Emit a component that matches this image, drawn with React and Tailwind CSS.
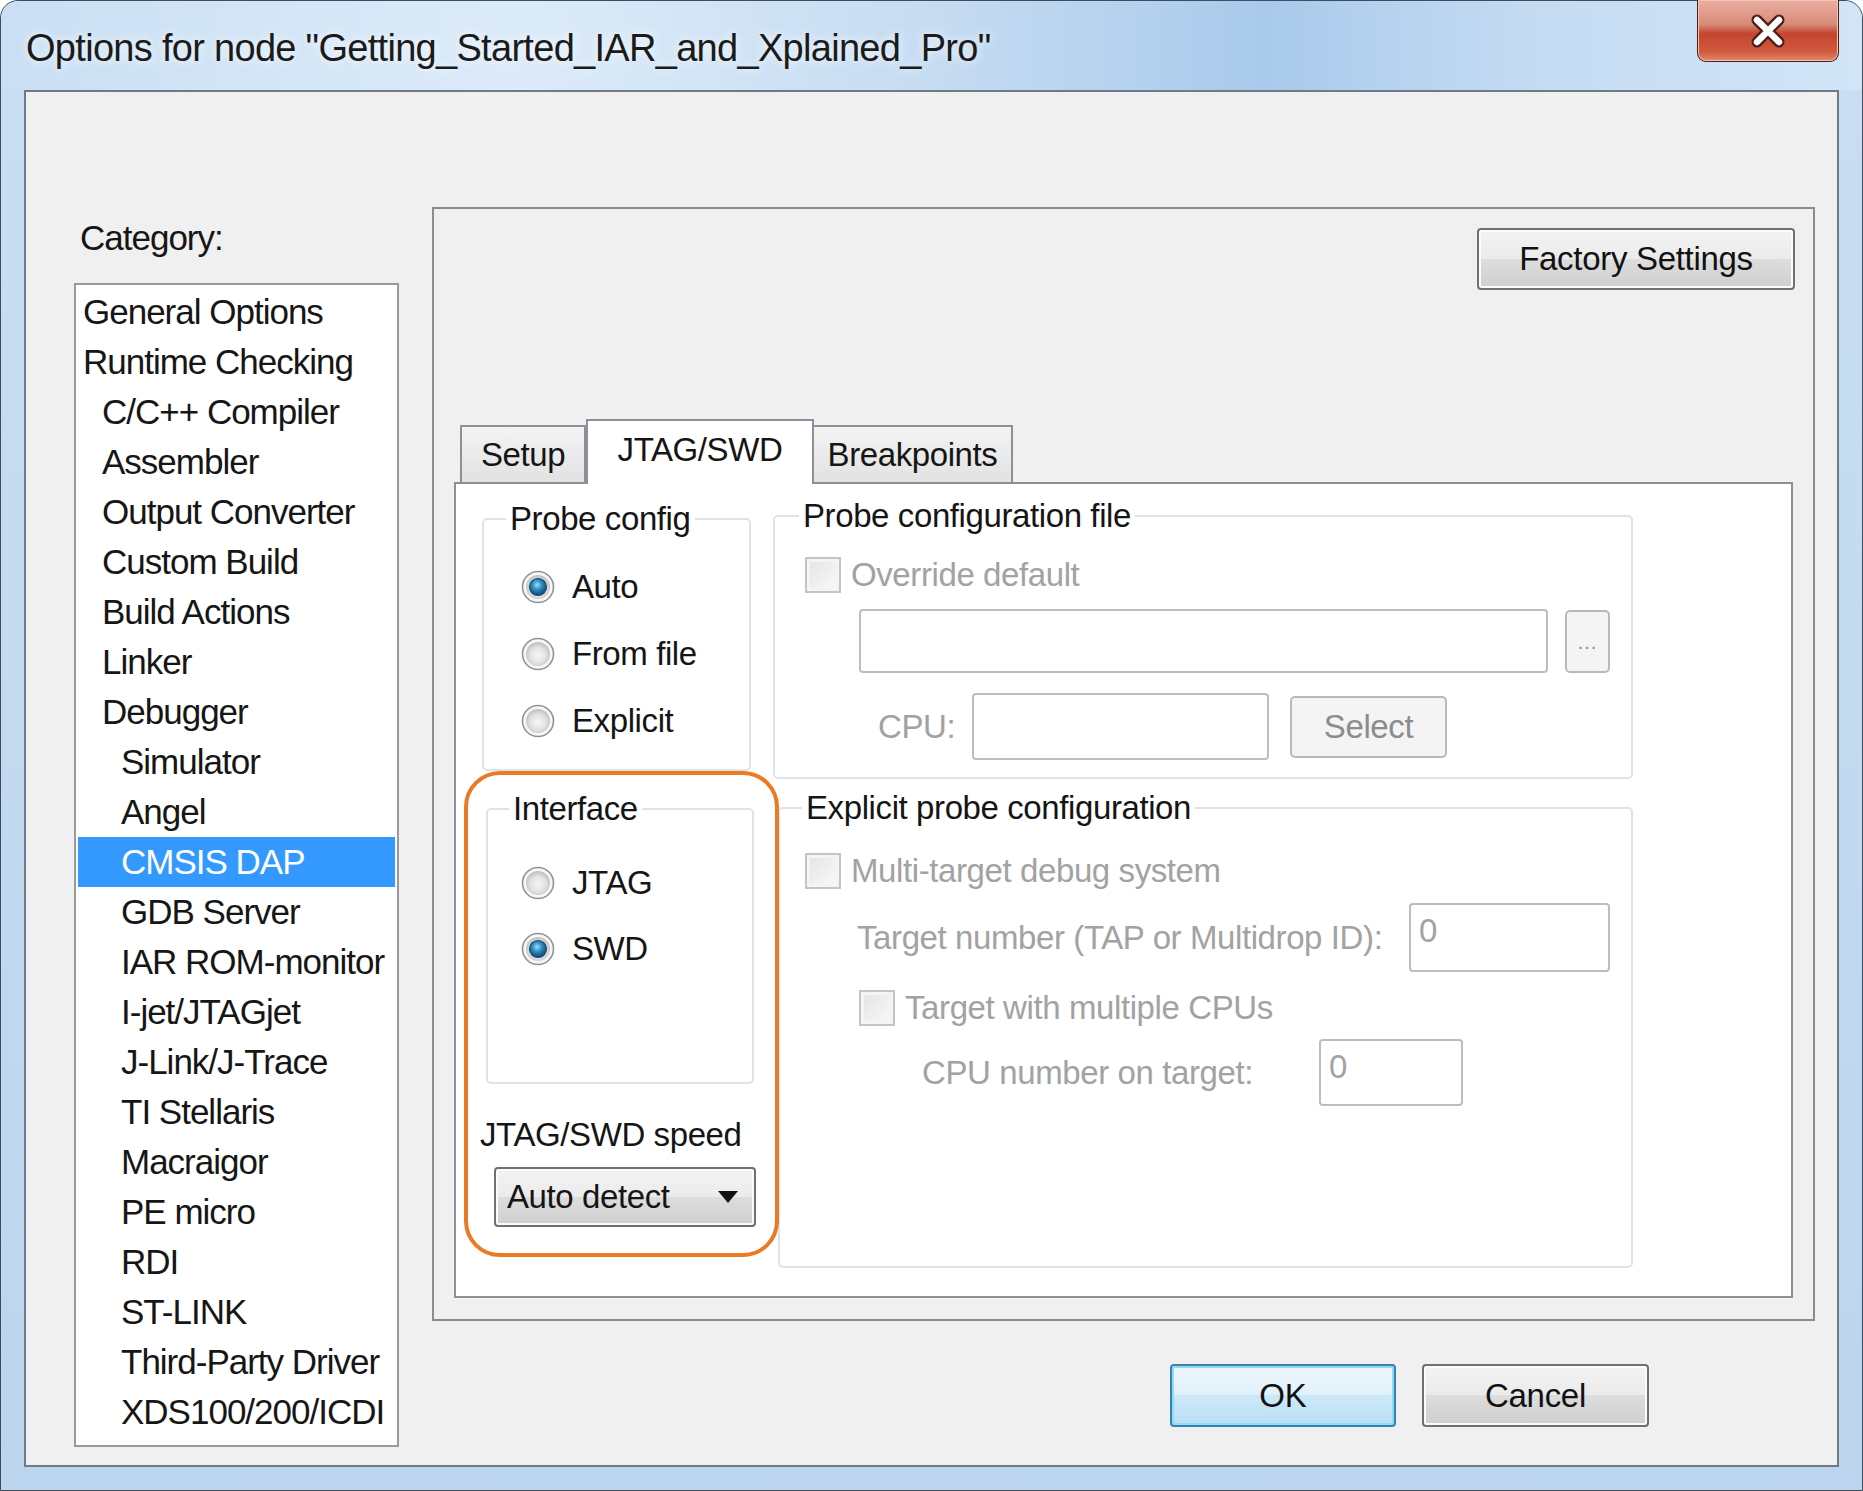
const items = [
  ["General Options", 0], ["Runtime Checking", 0], ["C/C++ Compiler", 1], ["Assembler", 1],
  ["Output Converter", 1], ["Custom Build", 1], ["Build Actions", 1], ["Linker", 1], ["Debugger", 1],
  ["Simulator", 2], ["Angel", 2], ["CMSIS DAP", 2], ["GDB Server", 2], ["IAR ROM-monitor", 2],
  ["I-jet/JTAGjet", 2], ["J-Link/J-Trace", 2], ["TI Stellaris", 2], ["Macraigor", 2], ["PE micro", 2],
  ["RDI", 2], ["ST-LINK", 2], ["Third-Party Driver", 2], ["XDS100/200/ICDI", 2],
]

const indent = ["pl-[5px]", "pl-[24px]", "pl-[43px]"]

const btn =
  "flex items-center justify-center rounded-[4px] border-[2px] border-[#707070] bg-[linear-gradient(to_bottom,#f3f3f3_0%,#ebebeb_50%,#dddddd_50%,#cfcfcf_100%)] shadow-[inset_0_0_0_2px_#fbfbfb] text-[33px] tracking-[-0.3px] text-[#111]"

const disabledBtn =
  "flex items-center justify-center rounded-[5px] border-[2px] border-[#b9b9b9] bg-[#f4f4f4] text-[#8c8c8c]"

const disabledInput = "rounded-[4px] border-[2px] border-[#bdbdbd] bg-white"

function Radio({ id, checked }) {
  return (
    <svg width="34" height="34" viewBox="0 0 34 34" className="shrink-0">
      <defs>
        <radialGradient id={id + "f"} cx="50%" cy="55%" r="55%">
          <stop offset="0%" stopColor="#f6f6f6" />
          <stop offset="60%" stopColor="#e2e2e2" />
          <stop offset="100%" stopColor="#bdbdbd" />
        </radialGradient>
        <radialGradient id={id + "d"} cx="45%" cy="38%" r="62%">
          <stop offset="0%" stopColor="#9ee0fa" />
          <stop offset="45%" stopColor="#2e8dc3" />
          <stop offset="100%" stopColor="#0c4671" />
        </radialGradient>
      </defs>
      <circle cx="17" cy="17" r="15.5" fill="#f7f7f7" stroke="#8f9398" strokeWidth="1.6" />
      <circle cx="17" cy="17" r="12" fill={`url(#${id}f)`} />
      {checked && <circle cx="17" cy="17" r="8.5" fill={`url(#${id}d)`} stroke="#1b4c70" strokeWidth="1.2" />}
    </svg>
  )
}

function Check() {
  return (
    <div className="w-[36px] h-[36px] shrink-0 border-[2px] border-[#c4c4c4] bg-[linear-gradient(135deg,#e3e3e3,#fafafa)] shadow-[inset_0_0_0_3px_#f4f4f4]" />
  )
}

function Group({ title, className, legendClass, children }) {
  return (
    <fieldset className={"border-[2px] border-[#dde3e8] rounded-[5px] " + className}>
      <legend className={"px-[4px] leading-[40px] text-[33px] tracking-[-0.4px] text-[#151515] " + legendClass}>{title}</legend>
      {children}
    </fieldset>
  )
}

export default function App() {
  return (
    <div className="w-[1863px] h-[1491px] overflow-hidden bg-white font-['Liberation_Sans',Arial,sans-serif]">
      <div className="w-full h-full rounded-t-[18px] border border-[#3d4d60] bg-[linear-gradient(to_bottom,#c9def3,#bcd5ee)] flex flex-col">
        {/* title bar */}
        <div className="h-[89px] flex items-start rounded-t-[18px] bg-[linear-gradient(to_right,#cadff4_0%,#dcebf9_28%,#c6dcf2_50%,#a9caec_68%,#c4dbf2_82%,#d2e5f7_100%)]">
          <div className="flex-1 ml-[25px] mt-[25px] leading-[44px] text-[38px] tracking-[-0.7px] text-[#1b1b1b] [text-shadow:0_0_10px_#ffffff]">
            Options for node "Getting_Started_IAR_and_Xplained_Pro"
          </div>
          <div className="mr-[23px] -mt-px w-[142px] h-[62px] rounded-b-[9px] border border-[#4b1f16] border-t-0 bg-[linear-gradient(to_bottom,#eab0a2_0%,#d88a78_40%,#c54530_55%,#d25a3d_85%,#e0896d_100%)] shadow-[inset_0_0_0_1px_#f3c3b6] flex items-center justify-center">
            <svg width="40" height="34" viewBox="0 0 40 34">
              <path d="M9 6 L31 28 M31 6 L9 28" stroke="#4a2019" strokeWidth="11" strokeLinecap="round" />
              <path d="M9 6 L31 28 M31 6 L9 28" stroke="#ffffff" strokeWidth="6.5" strokeLinecap="round" />
            </svg>
          </div>
        </div>

        {/* client area */}
        <div className="mx-[23px] h-[1377px] border-[2px] border-[#6e7a88] bg-[#f0f0f0] flex items-start">
          {/* category */}
          <div className="ml-[48px] w-[325px] flex flex-col">
            <div className="mt-[124px] ml-[6px] leading-[44px] text-[35px] tracking-[-1px] text-[#161616]">Category:</div>
            <div className="mt-[23px] h-[1164px] border-[2px] border-[#9a9a9a] bg-white px-[2px] pt-[2px]">
              {items.map(([name, lvl]) => (
                <div
                  key={name}
                  className={
                    "h-[50px] flex items-center text-[35px] tracking-[-1px] " +
                    indent[lvl] +
                    (name === "CMSIS DAP" ? " bg-[#3399ff] text-white" : " text-[#161616]")
                  }
                >
                  {name}
                </div>
              ))}
            </div>
          </div>

          {/* right side */}
          <div className="ml-[33px] flex flex-col">
            <div className="mt-[115px] w-[1383px] h-[1114px] border-[2px] border-[#8c8c8c] flex flex-col">
              <div className="flex justify-end pr-[18px] pt-[19px]">
                <div className={btn + " w-[318px] h-[62px]"}>Factory Settings</div>
              </div>

              {/* tabs */}
              <div className="mt-[129px] h-[63px] pl-[26px] flex items-end text-[33px] tracking-[-0.4px] text-[#151515]">
                <div className="w-[126px] h-[57px] flex items-center justify-center border-[2px] border-b-0 border-[#8d9098] bg-[linear-gradient(to_bottom,#f3f3f3,#e2e2e2)]">Setup</div>
                <div className="relative z-10 w-[228px] h-[65px] -mb-[2px] flex items-center justify-center pb-[6px] border-[2px] border-b-0 border-[#8d9098] bg-white">JTAG/SWD</div>
                <div className="w-[199px] h-[57px] flex items-center justify-center border-[2px] border-b-0 border-l-0 border-[#8d9098] bg-[linear-gradient(to_bottom,#f3f3f3,#e2e2e2)]">Breakpoints</div>
              </div>

              {/* tab panel */}
              <div className="relative mx-[20px] h-[816px] border-[2px] border-[#8d9098] bg-white flex items-start text-[33px] tracking-[-0.4px] text-[#151515]">
                {/* left column */}
                <div className="mt-[15px] ml-[26px] w-[272px] flex flex-col">
                  <Group title="Probe config" className="w-[269px] h-[272px]" legendClass="ml-[22px]">
                    <div className="pt-[26px] pl-[37px] flex flex-col gap-[23px]">
                      <div className="h-[44px] flex items-center gap-[17px]"><Radio id="r1" checked />Auto</div>
                      <div className="h-[44px] flex items-center gap-[17px]"><Radio id="r2" />From file</div>
                      <div className="h-[44px] flex items-center gap-[17px]"><Radio id="r3" />Explicit</div>
                    </div>
                  </Group>
                  <Group title="Interface" className="mt-[18px] ml-[4px] w-[268px] h-[295px]" legendClass="ml-[21px]">
                    <div className="pt-[32px] pl-[33px] flex flex-col gap-[22px]">
                      <div className="h-[44px] flex items-center gap-[17px]"><Radio id="r4" />JTAG</div>
                      <div className="h-[44px] flex items-center gap-[17px]"><Radio id="r5" checked />SWD</div>
                    </div>
                  </Group>
                  <div className="mt-[31px] -ml-[2px] leading-[40px] whitespace-nowrap">JTAG/SWD speed</div>
                  <div className="mt-[12px] ml-[12px] w-[262px] h-[60px] rounded-[4px] border-[2px] border-[#707070] bg-[linear-gradient(to_bottom,#f3f3f3_0%,#ebebeb_50%,#dddddd_50%,#cfcfcf_100%)] shadow-[inset_0_0_0_2px_#fbfbfb] flex items-center pl-[11px] pr-[16px]">
                    <span className="flex-1">Auto detect</span>
                    <svg width="20" height="12" viewBox="0 0 20 12"><path d="M0 0 H20 L10 12 Z" fill="#111" /></svg>
                  </div>
                </div>

                {/* right column */}
                <div className="mt-[12px] ml-[19px] flex flex-col">
                  <Group title="Probe configuration file" className="w-[860px] h-[283px]" legendClass="ml-[24px]">
                    <div className="pt-[17px] flex flex-col">
                      <div className="h-[44px] pl-[30px] flex items-center gap-[10px] text-[#a2a2a2]"><Check />Override default</div>
                      <div className="mt-[12px] pl-[84px] flex items-center gap-[17px]">
                        <div className={disabledInput + " w-[689px] h-[64px]"} />
                        <div className={disabledBtn + " w-[45px] h-[63px] items-end pb-[14px] text-[20px] tracking-[1px]"}>...</div>
                      </div>
                      <div className="mt-[20px] pl-[103px] flex items-center">
                        <div className="w-[94px] text-[#a2a2a2]">CPU:</div>
                        <div className={disabledInput + " w-[297px] h-[67px]"} />
                        <div className={disabledBtn + " ml-[21px] w-[157px] h-[62px] text-[33px] tracking-[-0.4px]"}>Select</div>
                      </div>
                    </div>
                  </Group>
                  <Group title="Explicit probe configuration" className="mt-[9px] ml-[5px] w-[855px] h-[480px]" legendClass="ml-[22px]">
                    <div className="pt-[21px] flex flex-col text-[#a2a2a2]">
                      <div className="h-[44px] pl-[25px] flex items-center gap-[10px]"><Check />Multi-target debug system</div>
                      <div className="mt-[10px] pl-[77px] flex items-center">
                        <div className="w-[552px] whitespace-nowrap">Target number (TAP or Multidrop ID):</div>
                        <div className={disabledInput + " w-[201px] h-[69px] pl-[8px] pt-[6px] leading-[40px]"}>0</div>
                      </div>
                      <div className="mt-[14px] h-[44px] pl-[79px] flex items-center gap-[10px]"><Check />Target with multiple CPUs</div>
                      <div className="mt-[9px] pl-[142px] flex items-center">
                        <div className="w-[397px] whitespace-nowrap">CPU number on target:</div>
                        <div className={disabledInput + " w-[144px] h-[67px] pl-[8px] pt-[6px] leading-[40px]"}>0</div>
                      </div>
                    </div>
                  </Group>
                </div>

                {/* orange annotation */}
                <div className="absolute left-[8px] top-[287px] w-[315px] h-[486px] rounded-[36px] border-[4px] border-[#ea7a23] pointer-events-none" />
              </div>
            </div>

            <div className="mt-[43px] pr-[166px] flex justify-end gap-[26px]">
              <div className="w-[226px] h-[63px] flex items-center justify-center rounded-[4px] border-[2px] border-[#3c7fb1] bg-[linear-gradient(to_bottom,#eef7fc_0%,#e0f1fb_50%,#cde9f8_50%,#b9dff4_100%)] shadow-[inset_0_0_0_2px_#8fdcf7] text-[33px] text-[#111]">OK</div>
              <div className={btn + " w-[227px] h-[63px]"}>Cancel</div>
            </div>
          </div>
        </div>
      </div>
    </div>
  )
}
